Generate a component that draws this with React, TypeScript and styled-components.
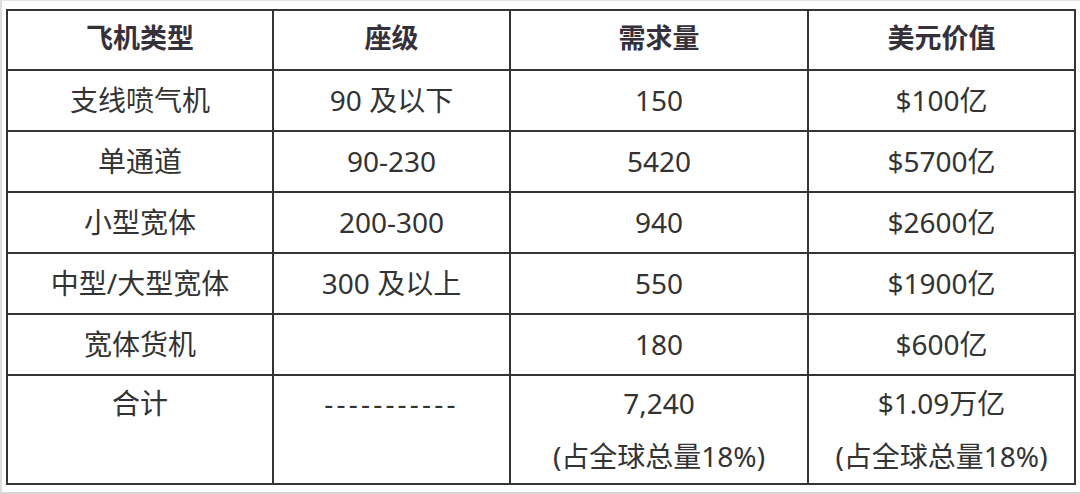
import React from "react";
import styled, { createGlobalStyle } from "styled-components";

const Global = createGlobalStyle`
  html, body { margin: 0; padding: 0; background: #ffffff; }
  body { width: 1080px; height: 494px; overflow: hidden; }
`;

const Frame = styled.div`
  box-sizing: border-box;
  width: 1080px;
  height: 494px;
  border-top: 1px solid #e4e4e4;
  border-left: 2px solid #dcdcdc;
  border-bottom: 2px solid #d6d6d6;
  padding: 8px 0 0 4px;
  background: #fff;
`;

const Table = styled.table`
  border-collapse: collapse;
  table-layout: fixed;
  width: 1070px;
  font-family: "Noto Sans", "Noto Sans CJK SC", sans-serif;
  font-size: 28px;
  color: #333;
`;

const HeadCell = styled.th`
  border: 2px solid #343434;
  height: 60px;
  padding: 0 0 4px;
  text-align: center;
  vertical-align: middle;
  font-weight: 700;
  font-size: 27px;
  color: #35303a;
  line-height: 52px;
  box-sizing: border-box;
`;

const Cell = styled.td<{ $tall?: boolean; $dashes?: boolean }>`
  border: 2px solid #343434;
  padding: ${(p) => (p.$tall ? "1px 0 0" : "3px 0")};
  text-align: center;
  vertical-align: ${(p) => (p.$tall ? "top" : "middle")};
  line-height: 53px;
  white-space: nowrap;
  letter-spacing: ${(p) => (p.$dashes ? "3.2px" : "0")};
`;

const Line = styled.div``;

const rows: [string, string, string, string][] = [
  ["支线喷气机", "90 及以下", "150", "$100亿"],
  ["单通道", "90-230", "5420", "$5700亿"],
  ["小型宽体", "200-300", "940", "$2600亿"],
  ["中型/大型宽体", "300 及以上", "550", "$1900亿"],
  ["宽体货机", "", "180", "$600亿"],
];

export default function App() {
  return (
    <>
      <Global />
      <Frame>
        <Table>
          <colgroup>
            <col style={{ width: 266 }} />
            <col style={{ width: 237 }} />
            <col style={{ width: 298 }} />
            <col style={{ width: 267 }} />
          </colgroup>
          <thead>
            <tr>
              <HeadCell>飞机类型</HeadCell>
              <HeadCell>座级</HeadCell>
              <HeadCell>需求量</HeadCell>
              <HeadCell>美元价值</HeadCell>
            </tr>
          </thead>
          <tbody>
            {rows.map((r) => (
              <tr key={r[0]}>
                {r.map((c, i) => (
                  <Cell key={i}>{c}</Cell>
                ))}
              </tr>
            ))}
            <tr>
              <Cell $tall>合计</Cell>
              <Cell $tall $dashes>-----------</Cell>
              <Cell $tall>
                <Line>7,240</Line>
                <Line>(占全球总量18%)</Line>
              </Cell>
              <Cell $tall>
                <Line>$1.09万亿</Line>
                <Line>(占全球总量18%)</Line>
              </Cell>
            </tr>
          </tbody>
        </Table>
      </Frame>
    </>
  );
}
